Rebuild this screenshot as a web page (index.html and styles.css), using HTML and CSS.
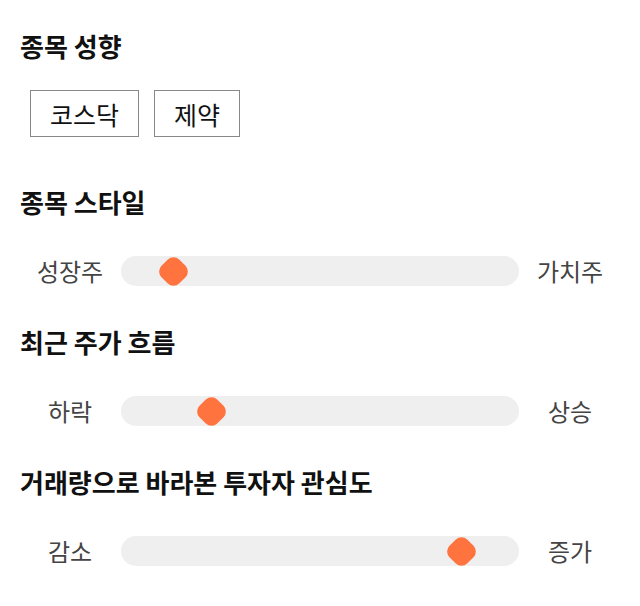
FILE: index.html
```html
<!DOCTYPE html>
<html>
  <head>
    <meta charset="utf-8">
    <title>종목 설정</title>
    <link rel="stylesheet" href="styles.css">
  </head>
  <body>
    <section class="group">
      <h2>종목 성향</h2>
      <div class="tags">
        <button type="button" class="tag">코스닥</button>
        <button type="button" class="tag">제약</button>
      </div>
    </section>

    <section class="group">
      <h2>종목 스타일</h2>
      <div class="slider-row">
        <span class="side">성장주</span>
        <div class="track">
          <span class="thumb" style="left: 37px"></span>
        </div>
        <span class="side">가치주</span>
      </div>
    </section>

    <section class="group">
      <h2>최근 주가 흐름</h2>
      <div class="slider-row">
        <span class="side">하락</span>
        <div class="track">
          <span class="thumb" style="left: 75px"></span>
        </div>
        <span class="side">상승</span>
      </div>
    </section>

    <section class="group">
      <h2>거래량으로 바라본 투자자 관심도</h2>
      <div class="slider-row">
        <span class="side">감소</span>
        <div class="track">
          <span class="thumb" style="left: 325px"></span>
        </div>
        <span class="side">증가</span>
      </div>
    </section>
  </body>
</html>
```

FILE: styles.css
```css
body {
  font-family: "Noto Sans CJK KR", "Noto Sans", sans-serif;
  background-color: #ffffff;
  color: #111111;
  margin: 0;
  padding: 30px 20px 0;
}

h2 {
  font-size: 26px;
  font-weight: bold;
  line-height: 32px;
  margin: 0;
}

.group {
  margin-bottom: 40px;
}

.group:first-child {
  margin-bottom: 49px;
}

.tags {
  display: flex;
  gap: 15px;
  padding: 28px 10px 0;
}

.tag {
  font-family: inherit;
  font-size: 25px;
  line-height: 32px;
  color: #111111;
  background-color: #ffffff;
  border: 1px solid #888888;
  border-radius: 0;
  height: 47px;
  padding: 0 19px;
  cursor: pointer;
}

.slider-row {
  display: flex;
  align-items: center;
  gap: 11px;
  padding: 38px 10px 0;
}

.side {
  width: 80px;
  text-align: center;
  font-size: 24px;
  line-height: 30px;
  color: #444444;
}

.track {
  position: relative;
  flex: 1;
  height: 30px;
  background-color: #efefef;
  border-radius: 15px;
}

.thumb {
  position: absolute;
  top: 0;
  width: 30px;
  height: 30px;
}

.thumb::before {
  content: "";
  position: absolute;
  left: 2.5px;
  top: 2.5px;
  width: 25px;
  height: 25px;
  background-color: #ff733f;
  border-radius: 8px;
  transform: rotate(45deg);
}
```
